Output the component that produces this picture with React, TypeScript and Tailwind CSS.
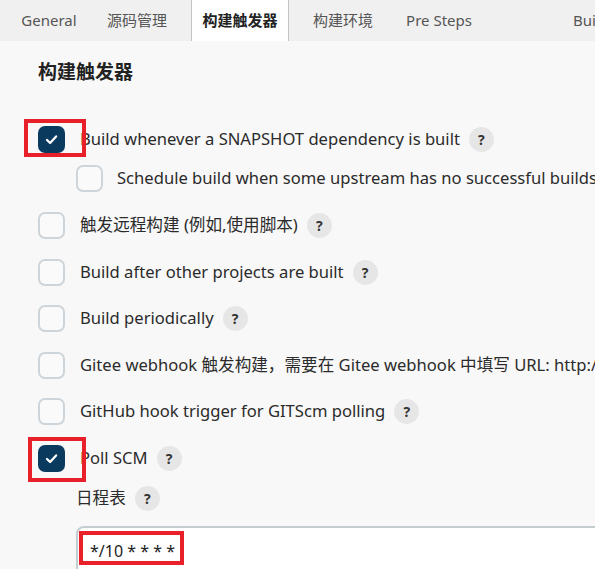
import React from "react";

const font = { fontFamily: '"Noto Sans", "Noto Sans CJK SC", sans-serif' };

// centred tab boxes, widths read off the screenshot
const tabs = [
  { label: "General", w: "w-[98px]" },
  { label: "源码管理", w: "w-[78px]" },
  { label: "构建触发器", w: "w-[98px]", active: true },
  { label: "构建环境", w: "w-[108px]" },
  { label: "Pre Steps", w: "w-[84px]" },
];

function Check({ checked }: { checked?: boolean }) {
  if (checked) {
    return (
      <div className="w-[27px] h-[27px] rounded-[7px] bg-[#0b3a5f] flex items-center justify-center flex-shrink-0">
        <svg width="15" height="15" viewBox="0 0 14 14" fill="none" stroke="white" strokeWidth="2.1" strokeLinecap="round" strokeLinejoin="round">
          <path d="M2.8 7.4l2.9 2.9 5.6-6.2" />
        </svg>
      </div>
    );
  }
  return <div className="w-[27px] h-[27px] rounded-[7px] border-2 border-[#cdd5da] bg-[#fafafa] flex-shrink-0" />;
}

function Help() {
  return (
    <span className="ml-[9px] w-[25px] h-[25px] rounded-full bg-[#e6e6e6] text-[#333] text-[14px] font-bold flex items-center justify-center flex-shrink-0">
      ?
    </span>
  );
}

function Row({ label, help = true, checked, red }: { label: string; help?: boolean; checked?: boolean; red?: string }) {
  return (
    <div className="relative flex items-center h-[27px]">
      <Check checked={checked} />
      <span className="ml-[15px] text-[16.6px] text-[#2b2b2b]">{label}</span>
      {help && <Help />}
      {red && <div className={`absolute border-4 border-[#e8202a] ${red}`} />}
    </div>
  );
}

export default function App() {
  return (
    <div className="w-[595px] h-[569px] overflow-hidden bg-[#f8f8f8] whitespace-nowrap" style={font}>
      {/* Tabs */}
      <div className="flex h-[41px] bg-[#f0f0f0] text-[15px] text-[#555]">
        {tabs.map((t) =>
          t.active ? (
            <div key={t.label} className={`${t.w} shrink-0 ml-[15px] h-[41px] flex items-center justify-center bg-white border-x border-[#c4c4c4] font-bold text-[#222]`}>
              {t.label}
            </div>
          ) : (
            <div key={t.label} className={`${t.w} shrink-0 flex items-center justify-center`}>
              {t.label}
            </div>
          )
        )}
        <div className="shrink-0 ml-[92px] flex items-center">Build</div>
      </div>

      {/* Section */}
      <div className="pl-[38px]">
        <h2 className="pt-[16px] text-[19px] font-bold text-[#222] leading-[30px]">构建触发器</h2>

        <div className="mt-[39px] flex flex-col">
          <Row label="Build whenever a SNAPSHOT dependency is built" checked red="left-[-14px] top-[-7px] w-[62px] h-[38px]" />
          <div className="flex mt-[11px] h-[29px]">
            <div className="ml-[13px] w-[2px] h-[29px] bg-[#cdd5da]" />
            <div className="ml-[25px] flex items-center">
              <Check />
              <span className="ml-[14px] text-[16.6px] text-[#2b2b2b]">Schedule build when some upstream has no successful builds</span>
            </div>
          </div>

          <div className="mt-[19px] flex flex-col gap-[19.5px]">
            <Row label="触发远程构建 (例如,使用脚本)" />
            <Row label="Build after other projects are built" />
            <Row label="Build periodically" />
            <Row label="Gitee webhook 触发构建，需要在 Gitee webhook 中填写 URL: http://localhost:8080/gitee-project/demo" help={false} />
            <Row label="GitHub hook trigger for GITScm polling" />
            <Row label="Poll SCM" checked red="left-[-10px] top-[-8px] w-[58px] h-[45px]" />
          </div>

          <div className="flex mt-[12px]">
            <div className="ml-[13px] w-[2px] h-[90px] bg-[#cdd5da]" />
            <div className="ml-[25px] flex flex-col">
              <div className="flex items-center h-[27px] mt-[1px]">
                <span className="text-[16.6px] text-[#2b2b2b]">日程表</span>
                <Help />
              </div>
              <div className="relative mt-[14px] w-[540px] h-[60px] bg-white border-2 border-[#c3cdcf] rounded-[8px]">
                <span className="absolute left-[12px] top-[11px] text-[16px] leading-[24px] text-[#222]">
                  */10 * * * *
                </span>
                <div className="absolute left-[1px] top-[3px] w-[105px] h-[34px] border-4 border-[#e8202a]" />
              </div>
            </div>
          </div>
        </div>
      </div>
    </div>
  );
}
